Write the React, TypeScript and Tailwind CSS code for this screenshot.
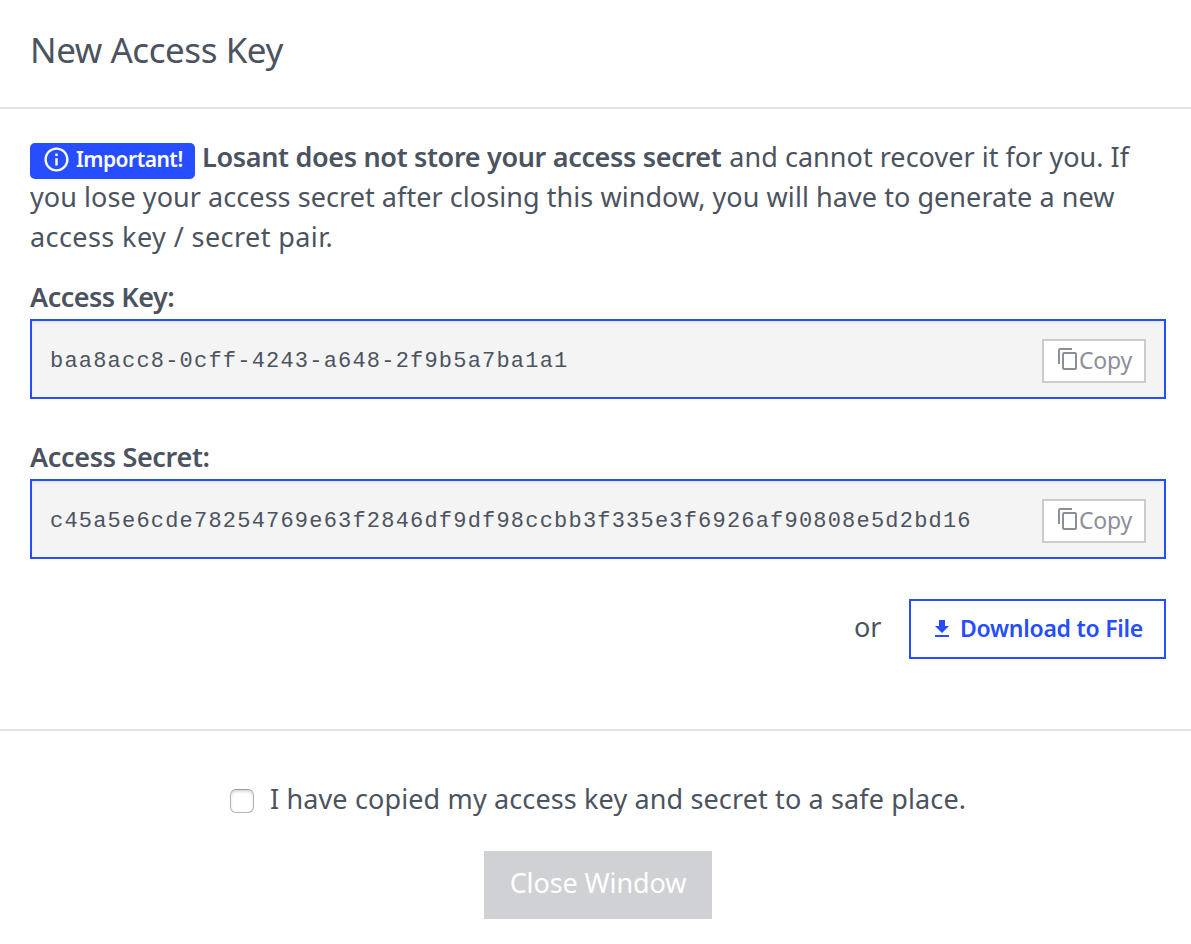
function InfoIcon() {
  return (
    <svg viewBox="0 0 24 24" className="size-[29px] shrink-0" fill="currentColor">
      <path d="M11 9h2V7h-2m1 13c-4.41 0-8-3.59-8-8s3.59-8 8-8 8 3.59 8 8-3.59 8-8 8m0-18C6.48 2 2 6.48 2 12s4.48 10 10 10 10-4.48 10-10S17.52 2 12 2m-1 15h2v-6h-2v6z" />
    </svg>
  );
}

function CopyIcon() {
  return (
    <svg viewBox="0 0 24 24" className="-mt-1 size-6 shrink-0" fill="currentColor">
      <path d="M19 21H8V7h11m0-2H8a2 2 0 0 0-2 2v14a2 2 0 0 0 2 2h11a2 2 0 0 0 2-2V7a2 2 0 0 0-2-2m-3-4H4a2 2 0 0 0-2 2v14h2V3h12V1z" />
    </svg>
  );
}

function DownloadIcon() {
  return (
    <svg viewBox="0 0 24 24" className="size-6 shrink-0" fill="currentColor">
      <path d="M5 20h14v-2H5m14-9h-4V3H9v6H5l7 7 7-7z" />
    </svg>
  );
}

function SecretField({ label, tracking, value }: { label: string; tracking: string; value: string }) {
  return (
    <div>
      <div className={`h-10 text-[27px] leading-9 font-semibold ${tracking}`}>{label}</div>
      <div className="flex h-20 items-center justify-between border-2 border-[#264dff] bg-[#f4f4f4] px-[18px] shadow-[inset_0_2px_2px_rgba(0,0,0,0.05)]">
        <code className="pt-1.5 font-['Liberation_Mono',monospace] text-[22px] leading-8 tracking-[1.2px]">{value}</code>
        <button className="mt-1 flex h-11 w-[104px] items-center border-2 border-[#cbcbcb] bg-white pl-3 text-[23px] leading-8 text-[#8a8f99]">
          <CopyIcon />
          <span className="-ml-px pb-0.5 tracking-[-0.2px]">Copy</span>
        </button>
      </div>
    </div>
  );
}

export default function App() {
  return (
    <div className="h-[944px] w-[1191px] overflow-hidden bg-white font-['Noto_Sans',sans-serif] text-[#4c5360]">
      <header className="flex h-[109px] items-start border-b-2 border-[#e3e3e3] pt-[27px] pl-[30px]">
        <h1 className="text-[35px] leading-[46px] tracking-[-0.45px]">New Access Key</h1>
      </header>

      <main className="h-[622px] border-b-2 border-[#e3e3e3] pt-7 pr-[25px] pl-[30px]">
        <div className="text-[27px] leading-10 whitespace-nowrap">
          <div className="flex h-10">
            <span className="mt-1.5 flex h-9 w-[165px] items-start rounded-[5px] bg-[#264dff] pl-[11.5px] text-white">
              <span className="mt-[1.5px]">
                <InfoIcon />
              </span>
              <span className="ml-[5.5px] text-[21px] leading-8 font-semibold tracking-[-0.5px]">Important!</span>
            </span>
            <strong className="ml-[7px] font-semibold tracking-[-0.33px]">Losant does not store your access secret</strong>
            <span className="ml-2 tracking-[0.03px]">and cannot recover it for you. If</span>
          </div>
          <div className="tracking-[0.06px]">you lose your access secret after closing this window, you will have to generate a new</div>
          <div className="tracking-[0.42px]">access key / secret pair.</div>
        </div>

        <div className="mt-[22px] flex flex-col gap-10">
          <SecretField label="Access Key:" tracking="tracking-[-0.5px]" value="baa8acc8-0cff-4243-a648-2f9b5a7ba1a1" />
          <SecretField
            label="Access Secret:"
            tracking="tracking-[-0.33px]"
            value="c45a5e6cde78254769e63f2846df9df98ccbb3f335e3f6926af90808e5d2bd16"
          />
        </div>

        <div className="mt-10 flex h-[60px] items-center justify-end">
          <span className="mr-7 pb-[5px] text-[27px] leading-10 tracking-[-0.3px]">or</span>
          <button className="flex h-[60px] w-[257px] items-center border-2 border-[#264dff] bg-white pl-[19px] text-[23px] font-semibold tracking-[-0.27px] text-[#264dff]">
            <DownloadIcon />
            <span className="ml-1.5 pb-0.5">Download to File</span>
          </button>
        </div>
      </main>

      <footer className="flex flex-col pt-12">
        <label className="flex h-10 items-center pl-[230px] text-[27px] leading-10 whitespace-nowrap">
          <input
            type="checkbox"
            className="mt-1 size-6 appearance-none rounded-[6px] border border-[#b4b4b4] border-t-[#9a9a9a] bg-white shadow-[inset_0_2px_3px_rgba(0,0,0,0.14)]"
          />
          <span className="ml-4 tracking-[0.13px]">I have copied my access key and secret to a safe place.</span>
        </label>
        <button className="mt-8 ml-[484px] h-[68px] w-[228px] bg-[#d0d1d5] pb-[3px] text-[27px] tracking-[-0.1px] text-white">Close Window</button>
      </footer>
    </div>
  );
}
